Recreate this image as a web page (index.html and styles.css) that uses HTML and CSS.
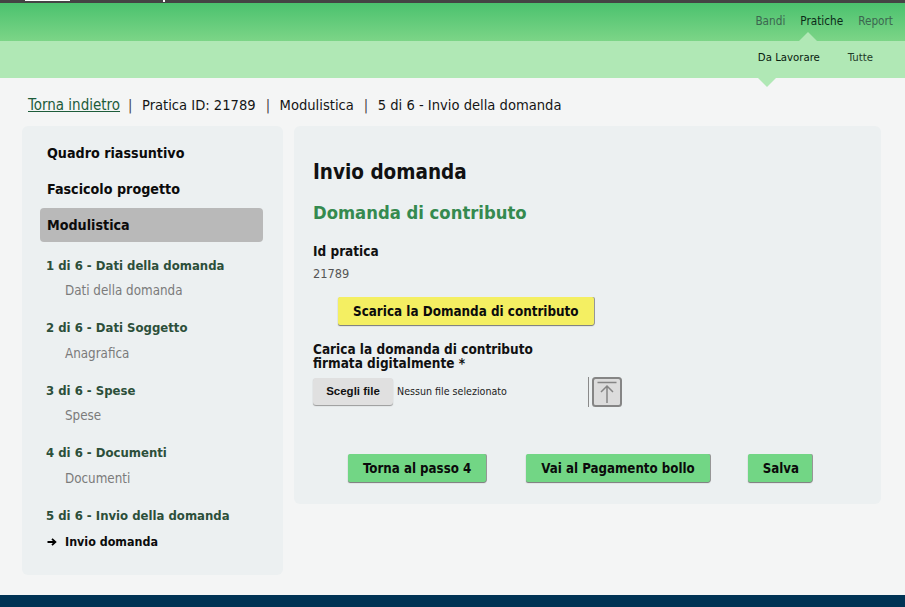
FILE: index.html
```html
<!DOCTYPE html>
<html lang="it">
<head>
<meta charset="UTF-8">
<title>Invio domanda</title>
<link rel="stylesheet" href="styles.css">
</head>
<body>

<div class="topbar">
  <span class="topbar-tab"></span>
  <span class="topbar-mark"></span>
</div>

<div class="nav">
  <a class="nav-link" href="#">Bandi</a>
  <a class="nav-link nav-active" href="#">Pratiche</a>
  <a class="nav-link" href="#">Report</a>
</div>

<div class="subnav">
  <a class="subnav-link subnav-active" href="#">Da Lavorare</a>
  <a class="subnav-link" href="#">Tutte</a>
</div>

<div class="crumbs">
  <a class="crumb-back" href="#">Torna indietro</a>
  <span class="crumb-sep">|</span>
  <span>Pratica ID: 21789</span>
  <span class="crumb-sep">|</span>
  <span>Modulistica</span>
  <span class="crumb-sep">|</span>
  <span>5 di 6 - Invio della domanda</span>
</div>

<div class="columns">
  <div class="side">
    <a class="side-top" href="#">Quadro riassuntivo</a>
    <a class="side-top" href="#">Fascicolo progetto</a>
    <a class="side-top side-current" href="#">Modulistica</a>

    <div class="step step-first">1 di 6 - Dati della domanda</div>
    <div class="substep">Dati della domanda</div>
    <div class="step">2 di 6 - Dati Soggetto</div>
    <div class="substep">Anagrafica</div>
    <div class="step">3 di 6 - Spese</div>
    <div class="substep">Spese</div>
    <div class="step">4 di 6 - Documenti</div>
    <div class="substep">Documenti</div>
    <div class="step">5 di 6 - Invio della domanda</div>
    <div class="substep substep-current">
      <svg class="substep-arrow" width="10" height="10" viewBox="0 0 10 10"><path d="M0.5 5H8M5 1.8L8.4 5L5 8.2" fill="none" stroke="#000" stroke-width="1.8"/></svg>
      Invio domanda
    </div>
  </div>

  <div class="main">
    <h1 class="main-title">Invio domanda</h1>
    <h2 class="main-sub">Domanda di contributo</h2>

    <div class="field-label">Id pratica</div>
    <div class="field-value">21789</div>

    <a class="btn btn-yellow" href="#">Scarica la Domanda di contributo</a>

    <div class="upload-label">Carica la domanda di contributo<br>firmata digitalmente *</div>
    <div class="upload-row">
      <span class="file-btn">Scegli file</span>
      <span class="file-name">Nessun file selezionato</span>
      <span class="upload-rule"></span>
      <svg class="upload-icon" width="30" height="30" viewBox="0 0 30 30">
        <rect x="1" y="1" width="28" height="28" rx="2.5" fill="#dcdcdc" stroke="#858585" stroke-width="2"/>
        <path d="M5.5 5.5H24.5" stroke="#858585" stroke-width="1.5"/>
        <path d="M15 26V9M9 15L15 9L21 15" fill="none" stroke="#858585" stroke-width="1.5"/>
      </svg>
    </div>

    <div class="actions">
      <a class="btn btn-green btn-back" href="#">Torna al passo 4</a>
      <a class="btn btn-green btn-next" href="#">Vai al Pagamento bollo</a>
      <a class="btn btn-green btn-save" href="#">Salva</a>
    </div>
  </div>
</div>

<div class="footer"></div>

</body>
</html>
```

FILE: styles.css
```css
body {
	margin: 0;
	height: 607px;
	overflow: hidden;
	background: #f4f5f5;
	font-family: "DejaVu Sans", Verdana, sans-serif;
	font-stretch: condensed;
	font-size: 14px;
	color: #111;
}
a {
	color: inherit;
	text-decoration: none;
}

/* top strip */
.topbar {
	display: flex;
	height: 3px;
	background: #444;
}
.topbar-tab {
	width: 45px;
	height: 1px;
	margin-left: 25px;
	background: #fff;
}
.topbar-mark {
	width: 2px;
	height: 2px;
	margin-left: 93px;
	background: #fff;
}

/* main nav */
.nav {
	display: flex;
	justify-content: flex-end;
	gap: 15px;
	height: 38px;
	padding: 11px 12px 0 0;
	box-sizing: border-box;
	background: linear-gradient(#4bc26e, #7cd587);
}
.nav-link {
	position: relative;
	font-size: 11.7px;
	color: #3c6650;
}
.nav-active {
	color: #0b2a18;
}
.nav-active:after {
	content: "";
	position: absolute;
	left: -1px;
	top: 18px;
	border: 9px solid transparent;
	border-top: 0;
	border-bottom-color: #b0e8b5;
}

.subnav {
	display: flex;
	justify-content: flex-end;
	gap: 27px;
	height: 37px;
	padding: 10px 32px 0 0;
	box-sizing: border-box;
	background: #b0e8b5;
}
.subnav-link {
	position: relative;
	font-size: 11.3px;
	color: #1f3a28;
}
.subnav-active {
	margin-right: 1px;
	color: #08200f;
}
.subnav-active:after {
	content: "";
	position: absolute;
	left: 0;
	top: 27px;
	border: 9px solid transparent;
	border-bottom: 0;
	border-top-color: #b0e8b5;
}

/* breadcrumb */
.crumbs {
	display: flex;
	height: 48px;
	padding: 18px 0 0 28px;
	box-sizing: border-box;
	font-size: 14.6px;
	line-height: 18px;
	color: #151515;
}
.crumb-back {
	margin-right: -2px;
	font-size: 15px;
	color: #1d5c3a;
	text-decoration: underline;
}
.crumb-sep {
	margin: 0 9.5px 0 10px;
	color: #444;
}

/* columns */
.columns {
	display: flex;
	align-items: flex-start;
	gap: 11px;
	padding-left: 22px;
}

.side {
	width: 261px;
	height: 449px;
	padding: 10px 20px 0 18px;
	box-sizing: border-box;
	background: #ecf0f1;
	border-radius: 6px;
}
.side-top {
	display: block;
	height: 34px;
	margin-bottom: 2px;
	padding-left: 7px;
	font-size: 14.2px;
	font-weight: bold;
	line-height: 34px;
	color: #0b0b0b;
}
.side-current {
	background: #b9b9b9;
	border-radius: 4px;
}
.step {
	margin-top: 16.9px;
	padding-left: 6px;
	font-size: 13px;
	font-weight: bold;
	line-height: 20px;
	color: #2c4f3a;
}
.step-first {
	margin-top: 13.7px;
}
.substep {
	display: flex;
	align-items: center;
	margin-top: 5.6px;
	padding-left: 25px;
	font-size: 13.3px;
	line-height: 20px;
	color: #7b7b7b;
}
.substep-current {
	padding-left: 7px;
	margin-top: 6px;
	font-size: 12.4px;
	font-weight: bold;
	color: #0b0b0b;
}
.substep-arrow {
	margin-right: 8px;
}

.main {
	width: 587px;
	height: 378px;
	padding: 31px 0 0 19px;
	box-sizing: border-box;
	background: #ecf0f1;
	border-radius: 6px;
}
.main-title {
	margin: 0;
	font-size: 20.5px;
	font-weight: bold;
	line-height: 30px;
	color: #111;
}
.main-sub {
	margin: 13px 0 0;
	font-size: 18.3px;
	font-weight: bold;
	line-height: 26px;
	color: #358a4f;
}
.field-label {
	margin-top: 15px;
	font-size: 13.5px;
	font-weight: bold;
	line-height: 20px;
}
.field-value {
	margin-top: 4px;
	font-size: 12.7px;
	line-height: 18px;
	color: #555;
}

.btn {
	display: inline-block;
	box-sizing: border-box;
	height: 28px;
	padding: 0 15px;
	font-size: 13.2px;
	font-weight: bold;
	line-height: 30px;
	color: #0b0b0b;
	border-radius: 2px;
	box-shadow: 0 1px 1px #777, 1px 0 0 #999;
}
.btn-yellow {
	margin: 14px 0 0 25px;
	padding-left: 15px;
	font-size: 13.35px;
	background: #f4ef62;
}
.btn-green {
	background: #72d685;
}

.upload-label {
	margin-top: 17px;
	font-size: 13.5px;
	font-weight: bold;
	line-height: 14px;
}
.upload-row {
	display: flex;
	align-items: flex-start;
	margin-top: 7px;
	height: 30px;
}
.file-btn {
	width: 80px;
	height: 27px;
	margin-top: 1px;
	box-sizing: border-box;
	font-family: "Liberation Sans", Arial, sans-serif;
	font-size: 11.5px;
	font-weight: bold;
	line-height: 27px;
	text-align: center;
	background: #e0e0e0;
	border-radius: 3px;
	box-shadow: 0 1px 1px #999;
}
.file-name {
	width: 191px;
	margin: 1px 0 0 4px;
	font-size: 10.6px;
	line-height: 27px;
	color: #222;
}
.upload-rule {
	width: 1px;
	height: 30px;
	background: #8a8a8a;
}
.upload-icon {
	margin-left: 3px;
}

.actions {
	display: flex;
	margin: 47px 0 0 35px;
}
.btn-back {
	margin-right: 40px;
}
.btn-next {
	margin-right: 38px;
}
.btn-save {
	padding-right: 13px;
}

.footer {
	position: absolute;
	left: 0;
	right: 0;
	top: 595px;
	height: 12px;
	background: #003354;
}
```
